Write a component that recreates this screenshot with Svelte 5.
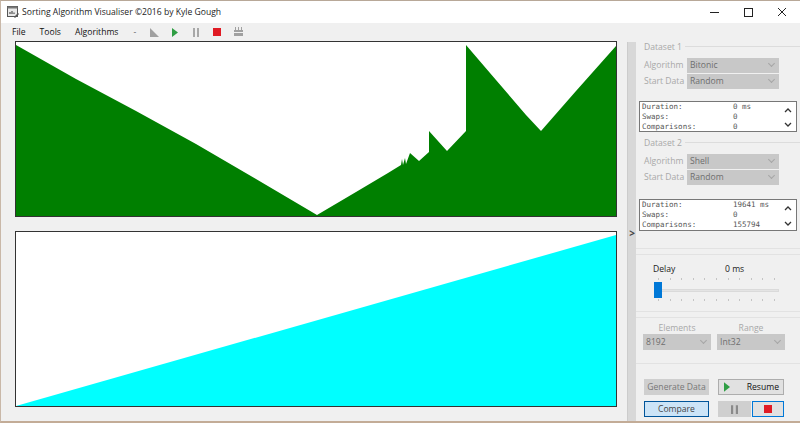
<script lang="ts">
	const menus = ['File', 'Tools', 'Algorithms'];

	const topPoints =
		'0,3 60,37 120,69 180,102 240,137 301,173 340,150 372,131 385,123 386,117 387,123 389,116 390,122 394,111 403,119 413,110 413,89 431,109 450,89 450,3 480,38 510,73 525,89 560,49 600,4 600,174 0,174';

	const datasets = [
		{ name: 'Dataset 1', algorithm: 'Bitonic', duration: '0 ms', swaps: '0', comparisons: '0' },
		{ name: 'Dataset 2', algorithm: 'Shell', duration: '19641 ms', swaps: '0', comparisons: '155794' }
	];
</script>

<div class="window">
	<header class="titlebar">
		<svg class="app-icon" viewBox="0 0 12 12" width="12" height="12">
			<rect x="0.500" y="0.500" width="10" height="10" fill="#e8e8e8" stroke="#555" />
			<rect x="0.500" y="0.500" width="10" height="2" fill="#777" />
			<path d="M3 8V6M5 8V5M7 8V6.500" stroke="#333" />
			<path d="M7 11l4-4 1 1-4 4z" fill="#555" />
		</svg>
		<span class="title">Sorting Algorithm Visualiser ©2016 by Kyle Gough</span>
		<div class="caption">
			<svg viewBox="0 0 34 22" width="34" height="22"><path d="M13 11.500h9" stroke="#222" /></svg>
			<svg viewBox="0 0 34 22" width="34" height="22"><rect x="13.500" y="7.500" width="8" height="8" fill="none" stroke="#222" /></svg>
			<svg viewBox="0 0 34 22" width="34" height="22"><path d="M13 7l8 8M21 7l-8 8" stroke="#222" /></svg>
		</div>
	</header>

	<nav class="menubar">
		{#each menus as m}
			<span class="menu">{m}</span>
		{/each}
		<span class="dash">-</span>
		<svg class="tool" viewBox="0 0 12 12" width="12" height="12"><path d="M2 2v9h9z" fill="#a0a0a0" /></svg>
		<svg class="tool" viewBox="0 0 12 12" width="12" height="12"><path d="M3 2l6 4.500-6 4.500z" fill="#2f9e44" /></svg>
		<svg class="tool" viewBox="0 0 12 12" width="12" height="12"><path d="M3 2h2v9H3zM7 2h2v9H7z" fill="#a8a8a8" /></svg>
		<svg class="tool" viewBox="0 0 12 12" width="12" height="12"><rect x="2" y="2" width="8" height="8" fill="#e01b24" /></svg>
		<svg class="tool" viewBox="0 0 12 12" width="12" height="12"><path d="M2 4h9v2H2zM2 7h9v3H2zM3 1h1v3H3zM6 1h1v3H6zM9 1h1v3H9z" fill="#a0a0a0" /></svg>
	</nav>

	<div class="body">
		<main class="charts">
			<svg class="chart" viewBox="0 0 600 174" width="602" height="176">
				<polygon points={topPoints} fill="#007f00" />
			</svg>
			<svg class="chart" viewBox="0 0 600 174" width="602" height="176">
				<polygon points="0,174 600,3 600,174" fill="#00ffff" />
			</svg>
		</main>

		<div class="splitter"><span class="grip">&gt;</span></div>

		<aside class="side">
			<div class="sets">
				{#each datasets as d}
					<section class="dataset">
						<div class="legend"><span>{d.name}</span><i></i></div>
						<div class="field">
							<span class="lbl">Algorithm</span>
							<div class="combo">{d.algorithm}<b></b></div>
						</div>
						<div class="field">
							<span class="lbl">Start Data</span>
							<div class="combo">Random<b></b></div>
						</div>
						<div class="stats">
							<div class="stat-text">
								<div><span>Duration:</span><span>{d.duration}</span></div>
								<div><span>Swaps:</span><span>{d.swaps}</span></div>
								<div><span>Comparisons:</span><span>{d.comparisons}</span></div>
							</div>
							<div class="spin">
								<svg viewBox="0 0 8 5" width="8" height="5"><path d="M1 4l3-3 3 3" fill="none" stroke="#333" stroke-width="1.300" /></svg>
								<svg viewBox="0 0 8 5" width="8" height="5"><path d="M1 1l3 3 3-3" fill="none" stroke="#333" stroke-width="1.300" /></svg>
							</div>
						</div>
					</section>
				{/each}
			</div>

			<section class="panel delay">
				<div class="delay-head"><span>Delay</span><span>0 ms</span></div>
				<div class="slider">
					<div class="ticks">{#each Array(11) as _}<i></i>{/each}</div>
					<div class="track"><span class="thumb"></span></div>
					<div class="ticks">{#each Array(11) as _}<i></i>{/each}</div>
				</div>
			</section>

			<section class="panel sizes">
				<div class="size">
					<span class="lbl">Elements</span>
					<div class="combo">8192<b></b></div>
				</div>
				<div class="size">
					<span class="lbl">Range</span>
					<div class="combo">Int32<b></b></div>
				</div>
			</section>

			<section class="actions">
				<div class="btn off">Generate Data</div>
				<div class="btn resume">
					<svg viewBox="0 0 7 11" width="6" height="10"><path d="M0 0l7 5.500-7 5.500z" fill="#2f9e44" /></svg>
					<span>Resume</span>
				</div>
				<div class="btn compare">Compare</div>
				<div class="pair">
					<div class="btn off square">
						<svg viewBox="0 0 8 10" width="7" height="9"><path d="M0 0h2.500v10H0zM5.500 0H8v10H5.500z" fill="#8a8a8a" /></svg>
					</div>
					<div class="btn stop square">
						<svg viewBox="0 0 8 8" width="8" height="8"><rect width="8" height="8" fill="#e01b24" /></svg>
					</div>
				</div>
			</section>
		</aside>
	</div>
</div>

<style>
	:global(body) {
		margin: 0;
		background: #fff;
	}

	.window {
		width: 800px;
		height: 423px;
		box-sizing: border-box;
		display: flex;
		flex-direction: column;
		overflow: hidden;
		background: #f0f0f0;
		border-left: 1px solid #c9b8a8;
		border-top: 1px solid #b8a898;
		border-bottom: 2px solid #c3ac97;
		font-family: 'Open Sans', 'Noto Sans', sans-serif;
		font-size: 8.600px;
		color: #111;
	}

	.titlebar {
		height: 22px;
		flex: none;
		display: flex;
		align-items: center;
		background: #fff;
		padding-left: 6px;
	}

	.app-icon {
		margin-right: 3px;
	}

	.title {
		color: #222;
		padding-bottom: 1px;
	}

	.caption {
		margin-left: auto;
		display: flex;
		margin-right: 1px;
	}

	.menubar {
		height: 18px;
		flex: none;
		display: flex;
		align-items: center;
		padding-left: 11px;
	}

	.menu {
		margin-right: 14px;
	}

	.dash {
		margin: 0 12px 0 1px;
		color: #666;
	}

	.tool {
		margin-right: 9px;
	}

	.body {
		flex: 1;
		display: flex;
		min-height: 0;
	}

	.charts {
		width: 626px;
		padding-left: 14px;
		box-sizing: border-box;
		display: flex;
		flex-direction: column;
		gap: 14px;
	}

	.chart {
		display: block;
		flex: none;
		box-sizing: border-box;
		width: 602px;
		height: 176px;
		background: #fff;
		border: 1px solid #333;
	}

	.splitter {
		width: 9px;
		margin-top: 1px;
		background: #d8d8d8;
		border-left: 1px solid #ccc;
		box-sizing: border-box;
		display: flex;
		align-items: center;
		justify-content: center;
	}

	.grip {
		font-size: 10px;
		font-weight: 700;
		color: #444;
		margin-top: 2px;
	}

	.side {
		flex: 1;
		min-width: 0;
		display: flex;
		flex-direction: column;
	}

	.sets {
		height: 207px;
		flex: none;
		box-sizing: content-box;
		border-bottom: 1px solid #e2e2e2;
	}

	.dataset {
		height: 96px;
		padding-left: 3px;
		box-sizing: border-box;
	}

	.legend {
		display: flex;
		align-items: center;
		padding-left: 5px;
		height: 11px;
		color: #a8a8a8;
	}

	.legend i {
		flex: 1;
		height: 1px;
		background: #dcdcdc;
		margin-left: 3px;
	}

	.field {
		display: flex;
		align-items: center;
		height: 16px;
		padding-left: 5px;
	}

	.legend + .field {
		margin-top: 5px;
	}

	.lbl {
		color: #a8a8a8;
	}

	.field .lbl {
		width: 36px;
		margin-right: 7px;
		text-align: center;
		white-space: nowrap;
	}

	.combo {
		width: 92px;
		height: 15px;
		box-sizing: border-box;
		display: flex;
		align-items: center;
		justify-content: space-between;
		padding: 0 5px 0 3px;
		background: #c8c8c8;
		color: #6e6e6e;
	}

	.combo b {
		width: 4px;
		height: 4px;
		margin-top: -3px;
		border-right: 1px solid #a6a6a6;
		border-bottom: 1px solid #a6a6a6;
		transform: rotate(45deg);
	}

	.stats {
		margin-top: 12px;
		width: 158px;
		height: 31px;
		box-sizing: border-box;
		background: #fff;
		border: 1px solid #777;
		display: flex;
		padding-left: 2px;
	}

	.dataset + .dataset .stats {
		margin-top: 14px;
		height: 32px;
	}

	.stat-text {
		flex: 1;
		font-family: 'DejaVu Sans Mono', 'Liberation Mono', monospace;
		font-size: 7.500px;
		line-height: 10px;
		color: #555;
	}

	.stat-text div {
		display: flex;
	}

	.stat-text span:first-child {
		width: 91px;
	}

	.spin {
		width: 17px;
		display: flex;
		flex-direction: column;
		justify-content: space-between;
		align-items: center;
		padding: 6px 0 4px;
	}

	.panel {
		flex: none;
		border-top: 1px solid #e2e2e2;
		border-bottom: 1px solid #e2e2e2;
		box-sizing: border-box;
	}

	.delay {
		margin-top: 5px;
		height: 58px;
		padding: 8px 0 0 17px;
	}

	.delay-head {
		display: flex;
		height: 12px;
		line-height: 12px;
		color: #222;
	}

	.delay-head span:first-child {
		width: 72px;
	}

	.slider {
		width: 123px;
		margin: 3px 0 0 3px;
	}

	.ticks {
		display: flex;
		justify-content: space-between;
		height: 2px;
		padding: 0 4px 0 2px;
	}

	.ticks i {
		width: 1px;
		height: 2px;
		background: #c4c4c4;
	}

	.track {
		position: relative;
		height: 3px;
		box-sizing: border-box;
		background: #e4e4e4;
		border: 1px solid #dadada;
		margin: 9px 0 7px;
	}

	.thumb {
		position: absolute;
		left: -3px;
		top: -8px;
		width: 8px;
		height: 16px;
		background: #0078d7;
	}

	.sizes {
		margin-top: 5px;
		height: 47px;
		padding: 4px 0 0 7px;
		display: flex;
		gap: 6px;
	}

	.size {
		width: 68px;
		display: flex;
		flex-direction: column;
		align-items: center;
	}

	.size .lbl {
		height: 12px;
		line-height: 12px;
	}

	.size .combo {
		width: 68px;
		height: 16px;
	}

	.actions {
		margin-top: 6px;
		padding: 9px 0 0 8px;
		display: grid;
		grid-template-columns: 65px 66px;
		column-gap: 9px;
		row-gap: 6px;
		grid-auto-rows: 16px;
	}

	.btn {
		box-sizing: border-box;
		display: flex;
		align-items: center;
		justify-content: center;
		white-space: nowrap;
		color: #777;
		border: 1px solid #ccc;
		background: #e1e1e1;
	}

	.off {
		background: #cfcfcf;
		border-color: #cfcfcf;
	}

	.resume {
		justify-content: space-between;
		padding: 0 4px 0 5px;
		color: #111;
		border-color: #adadad;
	}

	.compare {
		background: #cce4f7;
		border: 1px solid #005499;
		color: #444;
	}

	.pair {
		display: flex;
		gap: 1px;
	}

	.square {
		flex: 1;
	}

	.stop {
		border: 1px solid #0078d7;
	}
</style>
